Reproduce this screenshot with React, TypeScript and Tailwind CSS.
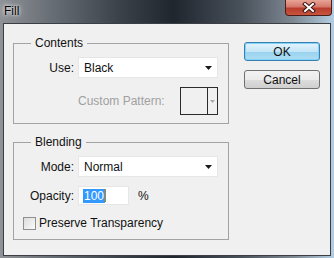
import React from 'react'

function Select({ value }: { value: string }) {
    return (
        <div className="flex h-[21px] w-[140px] items-center justify-between border border-[#e6e6e6] bg-white pl-[5px] pr-[5px]">
            <span>{value}</span>
            <svg width="7" height="4" viewBox="0 0 7 4">
                <path d="M0 0H7L3.5 4Z" fill="#1a1a1a" />
            </svg>
        </div>
    )
}

function Group({ title, children, className }: { title: string; children: React.ReactNode; className?: string }) {
    return (
        <fieldset className={`w-[216px] border border-[#a3a3a3] ${className ?? ''}`}>
            <legend className="ml-[17px] px-[4px] leading-[14px]">{title}</legend>
            {children}
        </fieldset>
    )
}

export default function App() {
    return (
        <div className="flex h-[258px] w-[334px] flex-col bg-[linear-gradient(to_right,#8f9397_0%,#6b7178_14%,#3a4149_36%,#1f262e_52%,#48505a_72%,#7f8993_88%,#b3cee3_100%)] font-['Liberation_Sans',Arial,sans-serif] text-[12px] text-[#111]">
            {/* title bar */}
            <div className="flex h-[23px] items-start justify-between">
                <span className="ml-[4px] mt-[4px] leading-[14px] text-black [text-shadow:0_0_6px_#ffffff,0_0_3px_#ffffff]">Fill</span>
                <div className="mr-[2px] flex h-[16px] w-[47px] items-center justify-center rounded-b-[4px] border border-t-0 border-[#4b1d18] bg-[linear-gradient(to_bottom,#e9a597_0%,#d4786a_45%,#b83c2c_55%,#c8553f_100%)]">
                    <svg width="14" height="11" viewBox="0 0 14 11">
                        <path d="M3 2L11 9M11 2L3 9" stroke="#3a1510" strokeWidth="4" strokeLinecap="square" />
                        <path d="M3 2L11 9M11 2L3 9" stroke="#ffffff" strokeWidth="2" strokeLinecap="square" />
                    </svg>
                </div>
            </div>

            {/* client area */}
            <div className="mx-[3px] mb-[2px] flex flex-1 border border-[#3b3f44] bg-[#f0f0f0]">
                <div className="flex flex-col pl-[9px] pt-[12px]">
                    <Group title="Contents" className="pb-[8px]">
                        <div className="mt-[7px] flex items-center">
                            <span className="w-[60px] text-right">Use:</span>
                            <div className="ml-[4px]">
                                <Select value="Black" />
                            </div>
                        </div>
                        <div className="ml-[64px] mt-[9px] flex w-[140px] items-center justify-between">
                            <span className="text-[#a0a0a0]">Custom Pattern:</span>
                            <div className="flex h-[28px] w-[38px] border border-[#2b2b2b]">
                                <div className="flex-1" />
                                <div className="flex w-[10px] items-center justify-center border-l border-[#2b2b2b]">
                                    <svg width="5" height="3" viewBox="0 0 5 3">
                                        <path d="M0 0H5L2.5 3Z" fill="#a8a8a8" />
                                    </svg>
                                </div>
                            </div>
                        </div>
                    </Group>

                    <Group title="Blending" className="mt-[11px] pb-[7px]">
                        <div className="mt-[7px] flex items-center">
                            <span className="w-[60px] text-right">Mode:</span>
                            <div className="ml-[4px]">
                                <Select value="Normal" />
                            </div>
                        </div>
                        <div className="mt-[9px] flex items-center">
                            <span className="w-[60px] text-right">Opacity:</span>
                            <div className="ml-[4px] flex h-[19px] w-[51px] items-center border border-[#e6e6e6] bg-white pl-[4px]">
                                <span className="bg-[#3399ff] px-[1px] leading-[14px] text-white">100</span>
                                <span className="h-[13px] w-[1px] bg-[#d08000]" />
                            </div>
                            <span className="ml-[9px]">%</span>
                        </div>
                        <div className="ml-[9px] mt-[9px] flex items-center">
                            <div className="h-[13px] w-[13px] border border-[#8e8f8f] bg-[linear-gradient(135deg,#dcdcdc,#fbfbfb)]" />
                            <span className="ml-[3px]">Preserve Transparency</span>
                        </div>
                    </Group>
                </div>

                <div className="ml-[15px] flex flex-col pt-[18px]">
                    <button className="h-[19px] w-[76px] rounded-[3px] border border-[#3c7fb1] bg-[linear-gradient(to_bottom,#e5f4fc_0%,#c4e5f6_50%,#98d1ef_51%,#b0def4_100%)] leading-none shadow-[inset_0_0_0_1px_#7fd3f7]">
                        OK
                    </button>
                    <button className="mt-[9px] h-[19px] w-[76px] rounded-[3px] border border-[#707070] bg-[linear-gradient(to_bottom,#f2f2f2_0%,#ebebeb_50%,#dddddd_51%,#cfcfcf_100%)] leading-none">
                        Cancel
                    </button>
                </div>
            </div>
        </div>
    )
}
